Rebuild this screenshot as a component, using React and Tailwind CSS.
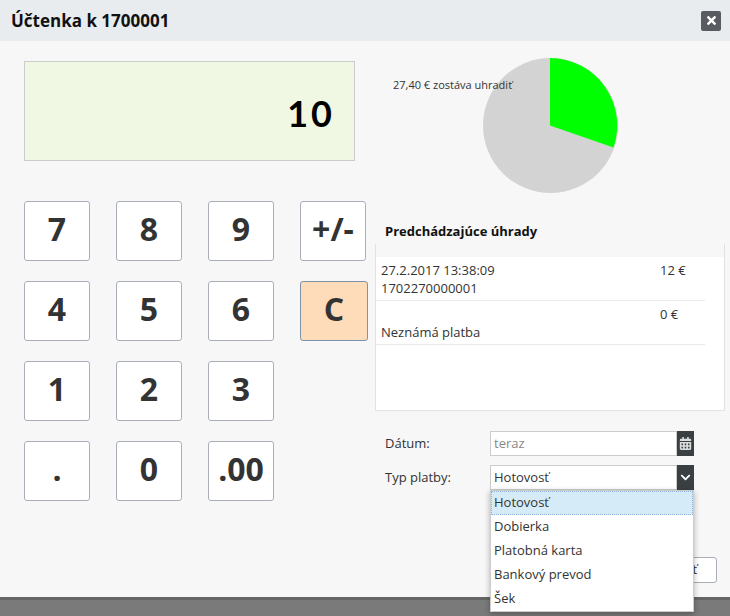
import { FaCalendarAlt, FaChevronDown, FaTimes } from 'react-icons/fa';

const klavesy = [
  ['7', '8', '9', '+/-'],
  ['4', '5', '6', 'C'],
  ['1', '2', '3'],
  ['.', '0', '.00'],
];

const uhrady = [
  { riadok1: '27.2.2017 13:38:09', riadok2: '1702270000001', suma: '12 €' },
  { riadok1: '', riadok2: 'Neznámá platba', suma: '0 €' },
];

const typy = ['Hotovosť', 'Dobierka', 'Platobná karta', 'Bankový prevod', 'Šek'];

function Klavesa({ text }) {
  if (text === 'C') {
    return (
      <button className="w-[68px] h-[60px] rounded-[3px] border border-[#7f93a8] bg-[#fedbb9] pb-[4px] text-[32px] font-bold text-[#333]">
        {text}
      </button>
    );
  }
  return (
    <button className="w-[66px] h-[60px] rounded-[3px] border border-[#a9aeb9] bg-white pb-[4px] text-[32px] font-bold text-[#333]">
      {text}
    </button>
  );
}

export default function App() {
  return (
    <div className="relative h-[616px] w-[730px] overflow-hidden bg-[#f7f7f7] font-['Open_Sans',sans-serif] text-[#333]">
      <div className="flex h-[41px] items-center justify-between bg-[#e9ecef] pl-[11px] pr-[9px]">
        <h1 className="text-[17px] font-bold text-[#111]">Účtenka k 1700001</h1>
        <button className="flex h-5 w-5 items-center justify-center rounded-[2px] bg-[#585c60] text-white">
          <FaTimes className="text-[13px]" />
        </button>
      </div>

      <div className="flex h-[556px]">
        {/* Kalkulačka */}
        <div className="w-[375px] shrink-0 pl-6 pt-5">
          <div className="flex h-[100px] w-[331px] items-center justify-end border border-[#ccc] bg-[#f0f8e4] pr-[19px] pt-[4px] font-['Lato',sans-serif] text-[36px] font-bold tracking-[3px] text-black">
            10
          </div>
          <div className="mt-10 flex flex-col gap-5">
            {klavesy.map((rad) => (
              <div key={rad[0]} className="flex gap-[26px]">
                {rad.map((k) => (
                  <Klavesa key={k} text={k} />
                ))}
              </div>
            ))}
          </div>
        </div>

        {/* Pravý stĺpec */}
        <div className="relative w-[350px] shrink-0">
          <div className="flex h-[173px] pt-[17px] pl-[108px]">
            <svg width="135" height="135" viewBox="0 0 135 135">
              <circle cx="67.5" cy="67.5" r="67.5" fill="#d3d3d3" />
              <path d="M67 67.5 L67 0 A67.5 67.5 0 0 1 130.5 89.5 Z" fill="#00ff00" />
            </svg>
          </div>
          <span className="absolute left-[18px] top-[36px] text-[11px] leading-[15px]">27,40 € zostáva uhradiť</span>

          <h2 className="h-[30px] pl-[10px] pt-[8px] text-[13px] leading-[18px] font-bold text-[#111]">Predchádzajúce úhrady</h2>
          <div className="h-[167px] border-x border-b border-[#e2e2e2] bg-white pt-[13px] shadow-[inset_0_13px_0_#f7f7f7]">
            {uhrady.map((u) => (
              <div key={u.riadok2} className="flex h-11 w-[329px] border-b border-[#e9e9e9] pl-[5px] text-[13px] leading-[18px]">
                <div className="w-[279px] pt-[4px]">
                  <div className="h-[18px]">{u.riadok1}</div>
                  <div>{u.riadok2}</div>
                </div>
                <div className="pt-[4px]">{u.suma}</div>
              </div>
            ))}
          </div>

          <div className="mt-5 flex flex-col gap-[9px] pl-[10px] text-[13px]">
            <div className="flex items-center">
              <label className="w-[105px]">Dátum:</label>
              <div className="flex h-[25px] w-[204px]">
                <div className="flex-1 border border-[#ccc] bg-white pl-[3px] leading-[22px] text-[#888]">teraz</div>
                <span className="flex w-[17px] items-center justify-center bg-[#3a3f42] text-[#ddd]">
                  <FaCalendarAlt className="text-[13px]" />
                </span>
              </div>
            </div>
            <div className="flex items-center">
              <label className="w-[105px]">Typ platby:</label>
              <div className="flex h-[25px] w-[204px]">
                <div className="flex-1 border border-[#ccc] bg-white pl-[3px] leading-[22px]">Hotovosť</div>
                <span className="flex w-[17px] items-center justify-center bg-[#3a3f42] text-white">
                  <FaChevronDown className="text-[11px]" />
                </span>
              </div>
            </div>
          </div>

          <div className="mt-[67px] flex justify-end pr-[8px]">
            <button className="h-[26px] w-[80px] rounded-[3px] border border-[#a9aeb9] bg-white pr-[2px] text-right text-[13px]">
              Uhradiť&nbsp;&nbsp;&nbsp;&nbsp;&nbsp;
            </button>
          </div>
        </div>
      </div>

      <div className="h-[19px] border-t-[3px] border-[#666] bg-[#7a7a7a]" />

      {/* Rozbalený zoznam */}
      <ul className="absolute left-[490px] top-[490px] w-[204px] border border-[#ccc] bg-white text-[13px] shadow-[0_2px_6px_rgba(0,0,0,0.3)]">
        {typy.map((t, i) => (
          <li
            key={t}
            className={
              i === 0
                ? 'h-6 border border-dotted border-[#8fb4e0] bg-[#d5ebf8] pl-[2px] leading-[20px]'
                : 'h-6 pl-[3px] leading-[22px]'
            }
          >
            {t}
          </li>
        ))}
      </ul>
    </div>
  );
}
